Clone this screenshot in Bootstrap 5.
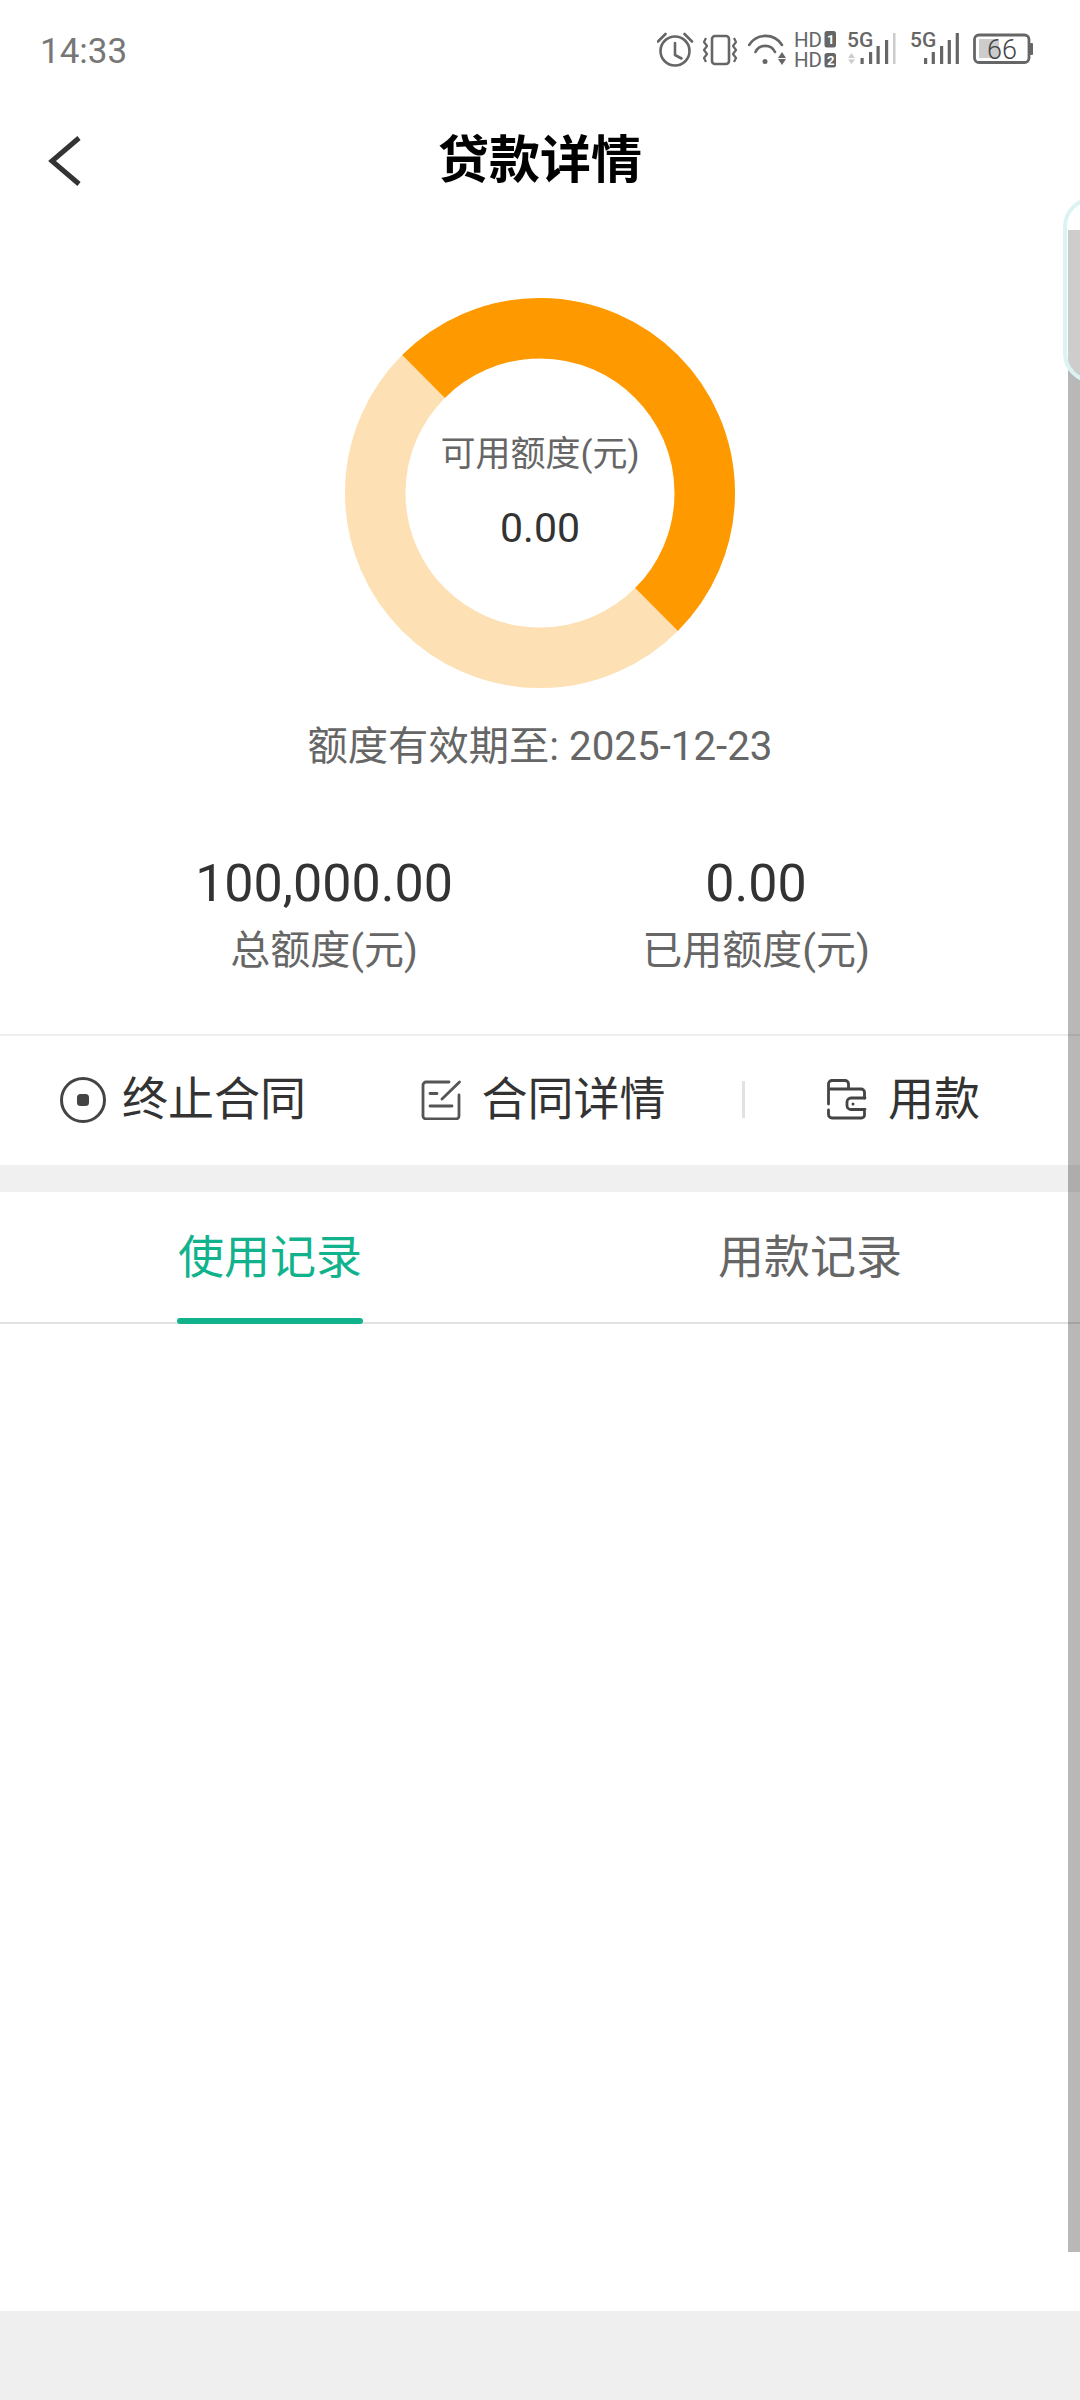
<!DOCTYPE html>
<html lang="zh">
<head>
  <meta charset="UTF-8" />
  <meta name="viewport" content="width=device-width, initial-scale=1.0"/>
  <title>贷款详情</title>
  <link href="https://cdn.jsdelivr.net/npm/bootstrap@5.3.2/dist/css/bootstrap.min.css" rel="stylesheet">
  <style>
    body { width: 1080px; min-height: 2400px; background: #fff; font-family: Roboto, "Noto Sans CJK SC", sans-serif; color: #333; overflow: hidden; }
    svg { display: block; flex: none; }
    svg text { font-family: Roboto, sans-serif; }

    .status-bar { height: 100px; padding: 0 47px 0 40px; }
    .status-time { font-size: 35px; color: #777; line-height: 1; padding-top: 3px; }

    .title-bar { height: 120px; padding-top: 2px; }
    .back-btn { left: 48px; top: 36px; }
    .page-title { font-size: 51px; font-weight: 700; color: #000; line-height: 60px; margin: 0; }

    .donut-box { width: 390px; height: 390px; margin: 78px auto 0; }
    .donut-text { padding-bottom: 3px; }
    .donut-label { font-size: 35px; line-height: 46px; color: #666; white-space: nowrap; }
    .donut-value { font-size: 41px; line-height: 46px; color: #333; margin-top: 27px; }
    .valid-date { font-size: 40.3px; line-height: 56px; color: #666; margin-top: 31px; }

    .stats-row { width: 864px; margin: 79px auto 0; padding-bottom: 55px; }
    .stat-num { font-size: 52px; line-height: 60px; color: #333; }
    .stat-name { font-size: 40px; line-height: 56px; color: #666; margin-top: 9px; }

    .action-row { height: 131px; border-top: 2px solid #eee; }
    .action-cell { font-size: 46px; color: #333; height: 100%; padding-bottom: 2px; }
    .action-gap { gap: 21px; }
    .action-shift { padding-left: 6px; }
    .action-sep { width: 3px; height: 37px; background: #e2e2e2; margin: 0 61px 0 22px; }
    .band { height: 27px; background: #f0f0f0; }

    .tab-strip { height: 132px; border-bottom: 2px solid #e2e2e2; }
    .tab-cell { font-size: 46px; color: #666; height: 130px; }
    .tab-cell.on { color: #12b28c; }
    .tab-cell.on::after { content: ""; position: absolute; left: 177px; width: 186px; bottom: -2px; height: 6px; border-radius: 3px; background: #12b28c; }

    .blank-area { height: 987px; }
    .page-foot { height: 89px; background: #efefef; }

    .side-scroll { left: 1068px; top: 230px; width: 12px; height: 2022px; background: rgba(0,0,0,.28); }
    .side-panel { left: 1063px; top: 197px; width: 60px; height: 186px; border: 4px solid #dcf3f4; border-radius: 34px; background: rgba(255,255,255,.3); }
  </style>
</head>
<body class="position-relative">

  <div class="status-bar d-flex align-items-center justify-content-between">
    <span class="status-time">14:33</span>
    <div class="d-flex align-items-center">
      <!-- status icons: viewBox uses the page's own x/y so they can be read against the screenshot -->
      <svg width="46" height="48" viewBox="657 26 46 48" fill="none" stroke="#666" stroke-width="2.6" stroke-linecap="round" stroke-linejoin="round">
        <circle cx="675" cy="51" r="14.5"/><path d="M675 43v12l6.500 3.500M658 41.500l7.500-7.500M692 41.500l-7.500-7.500"/>
      </svg>
      <svg width="45" height="48" viewBox="703 26 45 48" fill="none" stroke="#666" stroke-width="2.2" stroke-linejoin="round">
        <rect x="712" y="36" width="17" height="28" rx="3" stroke-width="2.6"/><path d="M706 38l-2 4 3 4-3 4 3 4-3 4 2 4M734 38l2 4-3 4 3 4-3 4 3 4-2 4"/>
      </svg>
      <svg width="47" height="48" viewBox="748 26 47 48" fill="none" stroke="#666" stroke-width="2.6" stroke-linecap="round">
        <path d="M749 45A19.500 19.500 0 0 1 782 45M755.500 52A10.800 10.800 0 0 1 775 52"/>
        <circle cx="765" cy="61.500" r="2.500" fill="#666" stroke="none"/>
        <path d="M782 52l4 6h-8zM782 65l4-6h-8z" fill="#666" stroke="none"/>
      </svg>
      <svg width="52" height="48" viewBox="795 26 52 48" fill="#666">
        <text x="794" y="47" font-size="20.500">HD</text><rect x="824.500" y="31" width="11.500" height="16.500" rx="2.500"/><text x="827" y="44" font-size="13" font-weight="700" fill="#fff">1</text>
        <text x="794" y="67" font-size="20.500">HD</text><rect x="824.500" y="53" width="11.500" height="14.500" rx="2.500"/><text x="827" y="65" font-size="13" font-weight="700" fill="#fff">2</text>
      </svg>
      <svg width="63" height="48" viewBox="847 26 63 48" fill="#666">
        <text x="847" y="47" font-size="21" font-weight="500">5G</text>
        <path d="M848 58l3.500-5 3.500 5zM848 59.500l3.500 4.500 3.500-4.500z" fill="#ccc"/>
        <rect x="860.500" y="58" width="3.200" height="6"/><rect x="869" y="52" width="3.200" height="12"/><rect x="876.500" y="46" width="3.200" height="18"/><rect x="885" y="40" width="3.200" height="24"/>
        <rect x="893" y="33" width="2.500" height="31" fill="#ccc"/>
      </svg>
      <svg width="63" height="48" viewBox="910 26 63 48" fill="#666">
        <text x="910" y="47" font-size="21" font-weight="500">5G</text>
        <rect x="924" y="58" width="3.200" height="6"/><rect x="931.700" y="52" width="3.200" height="12"/><rect x="940" y="46" width="3.200" height="18"/><rect x="947.700" y="40" width="3.200" height="24"/><rect x="955.700" y="33" width="3.200" height="31"/>
      </svg>
      <svg width="60" height="48" viewBox="973 26 60 48" fill="none">
        <rect x="979" y="39" width="20" height="19" fill="#ccc"/>
        <rect x="974.500" y="35" width="54.500" height="27.500" rx="4.500" stroke="#666" stroke-width="2.800"/>
        <rect x="1030" y="43" width="3" height="12" rx="1" fill="#666"/>
        <text x="1002" y="58.500" font-size="27" font-weight="300" fill="#444" text-anchor="middle">66</text>
      </svg>
    </div>
  </div>

  <div class="title-bar position-relative d-flex align-items-center justify-content-center">
    <svg class="back-btn position-absolute" width="34" height="50" viewBox="0 0 34 50" fill="none" stroke="#333" stroke-width="5">
      <path d="M31 2L4 25l27 23" stroke-linejoin="miter"/>
    </svg>
    <h1 class="page-title">贷款详情</h1>
  </div>

  <div class="donut-box position-relative">
    <svg width="390" height="390" viewBox="0 0 390 390" fill="none" stroke-width="60.5">
      <path d="M78.500 78.500A164.750 164.750 0 0 0 311.500 311.500" stroke="#fde0b4"/>
      <path d="M78.500 78.500A164.750 164.750 0 0 1 311.500 311.500" stroke="#ff9900"/>
    </svg>
    <div class="donut-text position-absolute top-50 start-50 translate-middle text-center">
      <div class="donut-label">可用额度(元)</div>
      <div class="donut-value">0.00</div>
    </div>
  </div>
  <div class="valid-date text-center">额度有效期至: 2025-12-23</div>

  <div class="stats-row row g-0 text-center">
    <div class="col-6">
      <div class="stat-num">100,000.00</div>
      <div class="stat-name">总额度(元)</div>
    </div>
    <div class="col-6">
      <div class="stat-num">0.00</div>
      <div class="stat-name">已用额度(元)</div>
    </div>
  </div>

  <div class="action-row row g-0">
    <div class="col-4 action-cell action-shift d-flex align-items-center justify-content-center gap-3">
      <svg width="46" height="46" viewBox="0 0 46 46" fill="none">
        <circle cx="23" cy="23" r="21.500" stroke="#444" stroke-width="3"/>
        <rect x="17" y="17" width="12" height="12" rx="3.500" fill="#444"/>
      </svg>
      <span>终止合同</span>
    </div>
    <div class="col-4 action-cell action-shift action-gap d-flex align-items-center justify-content-center">
      <svg width="40" height="40" viewBox="0 0 40 40" fill="none" stroke="#555" stroke-width="2.800" stroke-linecap="round">
        <path d="M28 2H5a3 3 0 0 0-3 3v31a3 3 0 0 0 3 3h30a3 3 0 0 0 3-3V15"/>
        <path d="M38.500 2L21 19M9 13.500h7M9 26h22"/>
      </svg>
      <span>合同详情</span>
    </div>
    <div class="col-4 action-cell action-gap d-flex align-items-center">
      <div class="action-sep"></div>
      <svg width="40" height="41" viewBox="0 0 40 41" fill="none" stroke="#444" stroke-width="2.800" stroke-linecap="round">
        <path d="M1.500 25V5A3.500 3.500 0 0 1 5 1.500h13A3.500 3.500 0 0 1 21.500 5v4M1.500 10H34a3.500 3.500 0 0 1 3.500 3.500V19"/>
        <path d="M38 19H24a4 4 0 0 0-4 4v3.500a4 4 0 0 0 4 4h14M37.500 30.500V36a3 3 0 0 1-3 3H5a3.500 3.500 0 0 1-3.500-3.500V31"/>
        <circle cx="26" cy="25" r="1.500" fill="#444" stroke="none"/>
      </svg>
      <span>用款</span>
    </div>
  </div>
  <div class="band"></div>

  <div class="tab-strip row g-0">
    <div class="col-6 tab-cell on position-relative d-flex justify-content-center align-items-center">使用记录</div>
    <div class="col-6 tab-cell d-flex justify-content-center align-items-center">用款记录</div>
  </div>

  <div class="blank-area"></div>
  <div class="page-foot"></div>

  <div class="side-scroll position-absolute"></div>
  <div class="side-panel position-absolute"></div>

  <script src="https://cdn.jsdelivr.net/npm/bootstrap@5.3.2/dist/js/bootstrap.bundle.min.js"></script>
</body>
</html>
